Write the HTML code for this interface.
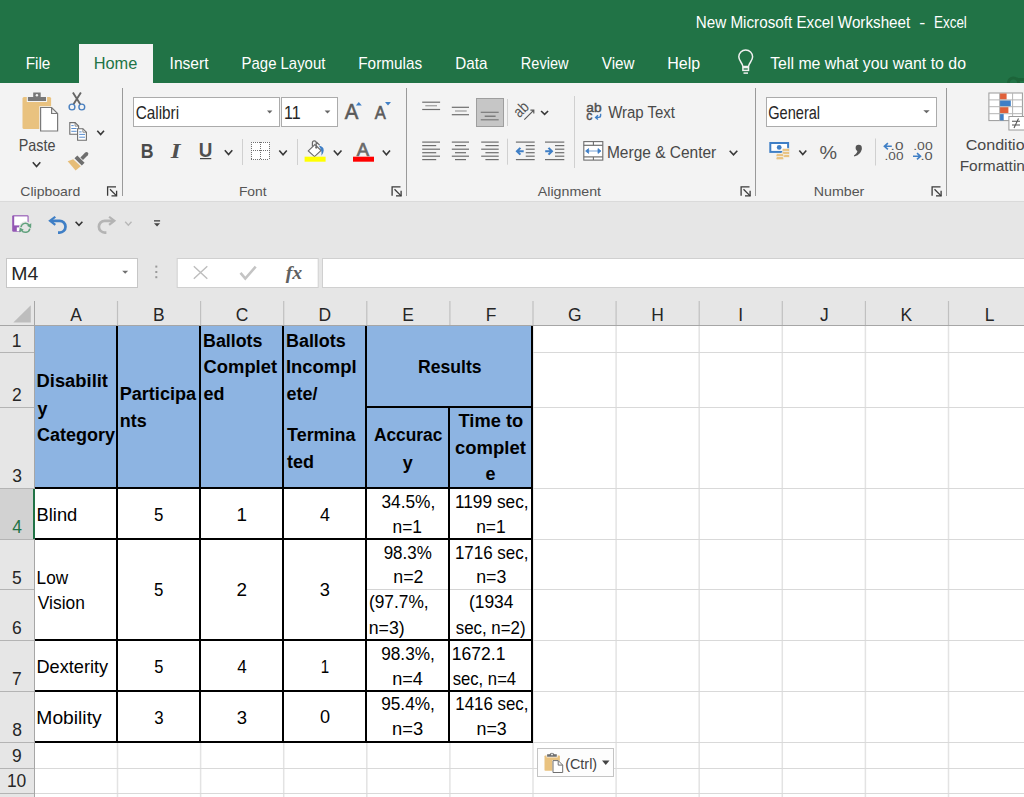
<!DOCTYPE html>
<html><head><meta charset="utf-8"><style>
html,body{margin:0;padding:0;background:#fff;overflow:hidden}
svg{display:block}
</style></head><body>
<svg width="1024" height="797" viewBox="0 0 1024 797">
<rect x="0" y="0" width="1024" height="83" fill="#217346" />
<rect x="79" y="44" width="74" height="39" fill="#f3f3f3" />
<text transform="translate(695.78 27.70) scale(0.9699 1)" font-family="Liberation Sans" font-size="15.70" font-weight="normal" font-style="normal" fill="#ffffff" >New Microsoft Excel Worksheet</text>
<text transform="translate(919.28 27.70) scale(1.1467 1)" font-family="Liberation Sans" font-size="15.70" font-weight="normal" font-style="normal" fill="#ffffff" >-</text>
<text transform="translate(933.92 27.70) scale(0.8586 1)" font-family="Liberation Sans" font-size="15.70" font-weight="normal" font-style="normal" fill="#ffffff" >Excel</text>
<text transform="translate(25.68 68.75) scale(0.9571 1)" font-family="Liberation Sans" font-size="15.99" font-weight="normal" font-style="normal" fill="#ffffff" >File</text>
<text transform="translate(93.69 68.75) scale(1.0244 1)" font-family="Liberation Sans" font-size="15.99" font-weight="normal" font-style="normal" fill="#217346" >Home</text>
<text transform="translate(169.60 68.75) scale(0.9747 1)" font-family="Liberation Sans" font-size="15.99" font-weight="normal" font-style="normal" fill="#ffffff" >Insert</text>
<text transform="translate(241.61 68.75) scale(0.9331 1)" font-family="Liberation Sans" font-size="15.99" font-weight="normal" font-style="normal" fill="#ffffff" >Page Layout</text>
<text transform="translate(358.28 68.75) scale(0.9575 1)" font-family="Liberation Sans" font-size="15.99" font-weight="normal" font-style="normal" fill="#ffffff" >Formulas</text>
<text transform="translate(455.28 68.75) scale(0.9504 1)" font-family="Liberation Sans" font-size="15.99" font-weight="normal" font-style="normal" fill="#ffffff" >Data</text>
<text transform="translate(520.84 68.75) scale(0.9089 1)" font-family="Liberation Sans" font-size="15.99" font-weight="normal" font-style="normal" fill="#ffffff" >Review</text>
<text transform="translate(601.85 68.75) scale(0.9499 1)" font-family="Liberation Sans" font-size="15.99" font-weight="normal" font-style="normal" fill="#ffffff" >View</text>
<text transform="translate(667.22 68.75) scale(0.9994 1)" font-family="Liberation Sans" font-size="15.99" font-weight="normal" font-style="normal" fill="#ffffff" >Help</text>
<text transform="translate(770.18 68.75) scale(0.9932 1)" font-family="Liberation Sans" font-size="15.99" font-weight="normal" font-style="normal" fill="#ffffff" >Tell me what you want to do</text>
<path d="M1008.4 83 A5 5 0 0 1 1018.6 83 M1018 79.5 H1024" fill="none" stroke="#1c6439" stroke-width="3"/>
<rect x="0" y="83" width="1024" height="118" fill="#f3f3f3" />
<rect x="0" y="201" width="1024" height="1" fill="#dadada" />
<rect x="0" y="202" width="1024" height="99" fill="#e6e6e6" />
<g fill="none" stroke="#f0f0f0" stroke-width="1.5"><path d="M742.9 66.5 C742.6 63 738.8 61 738.8 56.8 A6.9 6.9 0 0 1 752.6 56.8 C752.6 61 748.8 63 748.5 66.5 Z"/><rect x="742.9" y="67.6" width="5.6" height="2.8"/><path d="M743.5 73.1 H748"/></g>
<rect x="122" y="88" width="1" height="108" fill="#9a9a9a" />
<rect x="406" y="88" width="1" height="108" fill="#9a9a9a" />
<rect x="755" y="88" width="1" height="108" fill="#9a9a9a" />
<rect x="946" y="88" width="1" height="108" fill="#9a9a9a" />
<text transform="translate(20.30 196.10) scale(1.0480 1)" font-family="Liberation Sans" font-size="13.37" font-weight="normal" font-style="normal" fill="#555555" >Clipboard</text>
<text transform="translate(238.89 196.10) scale(1.0376 1)" font-family="Liberation Sans" font-size="13.37" font-weight="normal" font-style="normal" fill="#555555" >Font</text>
<text transform="translate(537.80 196.10) scale(1.0645 1)" font-family="Liberation Sans" font-size="13.37" font-weight="normal" font-style="normal" fill="#555555" >Alignment</text>
<text transform="translate(813.76 196.10) scale(1.0655 1)" font-family="Liberation Sans" font-size="13.37" font-weight="normal" font-style="normal" fill="#555555" >Number</text>
<g fill="none" stroke="#3a3a3a" stroke-width="1.3"><path d="M107.6 195.8 V186.9 H116"/><path d="M110 189.3 L116.6 195.9"/><path d="M111.5 195.9 H116.6 V190.8"/></g>
<g fill="none" stroke="#3a3a3a" stroke-width="1.3"><path d="M392.1 195.8 V186.9 H400.5"/><path d="M394.5 189.3 L401.1 195.9"/><path d="M396.0 195.9 H401.1 V190.8"/></g>
<g fill="none" stroke="#3a3a3a" stroke-width="1.3"><path d="M741.1 195.8 V186.9 H749.5"/><path d="M743.5 189.3 L750.1 195.9"/><path d="M745.0 195.9 H750.1 V190.8"/></g>
<g fill="none" stroke="#3a3a3a" stroke-width="1.3"><path d="M932.1 195.8 V186.9 H940.5"/><path d="M934.5 189.3 L941.1 195.9"/><path d="M936.0 195.9 H941.1 V190.8"/></g>
<rect x="22.5" y="97" width="28.6" height="32" rx="1.5" fill="#e9c27f"/>
<rect x="26.8" y="96" width="20.3" height="6" fill="#f3f3f3"/>
<path d="M33.2 92.6 H40.7 V97 H46 V101 H27.9 V97 H33.2 Z" fill="#787878"/>
<circle cx="36.9" cy="95.2" r="1.2" fill="#f3f3f3"/>
<path d="M39.3 106.3 H52.2 L58.8 112.9 V132.3 H39.3 Z" fill="#f3f3f3"/>
<path d="M40.6 107.5 H51.6 L57.6 113.5 V131 H40.6 Z M51.6 107.5 V113.5 H57.6" fill="#ffffff" stroke="#7a7a7a" stroke-width="1.2"/>
<text transform="translate(18.75 150.65) scale(0.8822 1)" font-family="Liberation Sans" font-size="16.28" font-weight="normal" font-style="normal" fill="#484848" >Paste</text>
<path d="M32.8 162.3 L36.55 166.6 L40.3 162.3" fill="none" stroke="#383838" stroke-width="1.6"/>
<path d="M72.9 92.6 L80.3 104.2 M80.9 92.6 L73.5 104.2" stroke="#666" stroke-width="1.9"/>
<circle cx="72" cy="107" r="2.9" fill="none" stroke="#4a80c0" stroke-width="1.4"/>
<circle cx="81.8" cy="107" r="2.9" fill="none" stroke="#4a80c0" stroke-width="1.4"/>
<path d="M69.8 122.6 H75.1 L78.6 126.1 V134.2 H69.8 Z" fill="#fff" stroke="#6e6e6e" stroke-width="1.1"/>
<path d="M75.1 122.6 V126.1 H78.6" fill="none" stroke="#6e6e6e" stroke-width="0.8"/>
<path d="M71.3 125.6 H73.7 M71.3 128.5 H76.6 M71.3 131.3 H76.6" stroke="#5a8fd0" stroke-width="1"/>
<path d="M77.6 128.7 H82.89999999999999 L86.39999999999999 132.2 V140.29999999999998 H77.6 Z" fill="#fff" stroke="#6e6e6e" stroke-width="1.1"/>
<path d="M82.89999999999999 128.7 V132.2 H86.39999999999999" fill="none" stroke="#6e6e6e" stroke-width="0.8"/>
<path d="M79.2 131.9 H81.6 M79.2 134.4 H85 M79.2 137.2 H85" stroke="#5a8fd0" stroke-width="1"/>
<path d="M97.3 130.8 L100.65 134.6 L104 130.8" fill="none" stroke="#383838" stroke-width="1.6"/>
<path d="M67.7 161.3 L73.2 159.2 L80.8 166.2 L75.6 170.5 Z" fill="#e6bd78"/>
<path d="M74.5 158.3 L77.3 155.5 L84.6 162.8 L81.8 165.6 Z" fill="#6e6e6e"/>
<path d="M80.4 157.4 L85.2 152.6 A1.5 1.5 0 0 1 87.8 155.2 L83 160 Z" fill="#6e6e6e"/>
<rect x="133.5" y="97.5" width="146" height="29" fill="#fff" stroke="#ababab" stroke-width="1"/>
<rect x="281.5" y="97.5" width="56" height="29" fill="#fff" stroke="#ababab" stroke-width="1"/>
<text transform="translate(135.63 118.75) scale(0.8811 1)" font-family="Liberation Sans" font-size="17.44" font-weight="normal" font-style="normal" fill="#262626" >Calibri</text>
<text transform="translate(283.92 118.75) scale(0.9199 1)" font-family="Liberation Sans" font-size="17.44" font-weight="normal" font-style="normal" fill="#262626" >11</text>
<path d="M267 110.6 H272.4 L269.7 113.4 Z" fill="#666"/>
<path d="M324.6 110.6 H330.4 L327.5 113.4 Z" fill="#666"/>
<text transform="translate(344.75 119.30) scale(0.9538 1)" font-family="Liberation Sans" font-size="21.37" font-weight="normal" font-style="normal" fill="#5a5a5a" stroke="#5a5a5a" stroke-width="0.6">A</text>
<path d="M355.8 105.6 L358.8 102.1 L361.8 105.6 Z" fill="#3f7fc6"/>
<text transform="translate(374.75 119.30) scale(0.9356 1)" font-family="Liberation Sans" font-size="17.73" font-weight="normal" font-style="normal" fill="#5a5a5a" stroke="#5a5a5a" stroke-width="0.6">A</text>
<path d="M385 102.1 H391 L388 105.6 Z" fill="#3f7fc6"/>
<text transform="translate(140.76 157.50) scale(0.8701 1)" font-family="Liberation Sans" font-size="20.35" font-weight="bold" font-style="normal" fill="#4a4a4a" >B</text>
<text transform="translate(170.75 157.50) scale(1.2343 1)" font-family="Liberation Serif" font-size="20.35" font-weight="bold" font-style="italic" fill="#505050" >I</text>
<text transform="translate(198.87 157.00) scale(0.9598 1)" font-family="Liberation Sans" font-size="19.62" font-weight="bold" font-style="normal" fill="#505050" >U</text>
<rect x="200" y="158" width="11.3" height="1.2" fill="#444" />
<path d="M224.8 150.3 L228.55 154.6 L232.3 150.3" fill="none" stroke="#383838" stroke-width="1.6"/>
<rect x="242" y="139" width="1" height="26" fill="#d0d0d0" />
<rect x="251.5" y="142" width="17.5" height="17.5" fill="#ffffff" />
<g fill="#707070" shape-rendering="crispEdges"><rect x="251" y="141.5" width="1" height="1"/><rect x="251" y="159" width="1" height="1"/><rect x="251" y="141.5" width="1" height="1"/><rect x="268.5" y="141.5" width="1" height="1"/><rect x="251" y="150.3" width="1" height="1"/><rect x="259.8" y="141.5" width="1" height="1"/><rect x="253" y="141.5" width="1" height="1"/><rect x="253" y="159" width="1" height="1"/><rect x="251" y="143.5" width="1" height="1"/><rect x="268.5" y="143.5" width="1" height="1"/><rect x="253" y="150.3" width="1" height="1"/><rect x="259.8" y="143.5" width="1" height="1"/><rect x="255" y="141.5" width="1" height="1"/><rect x="255" y="159" width="1" height="1"/><rect x="251" y="145.5" width="1" height="1"/><rect x="268.5" y="145.5" width="1" height="1"/><rect x="255" y="150.3" width="1" height="1"/><rect x="259.8" y="145.5" width="1" height="1"/><rect x="257" y="141.5" width="1" height="1"/><rect x="257" y="159" width="1" height="1"/><rect x="251" y="147.5" width="1" height="1"/><rect x="268.5" y="147.5" width="1" height="1"/><rect x="257" y="150.3" width="1" height="1"/><rect x="259.8" y="147.5" width="1" height="1"/><rect x="259" y="141.5" width="1" height="1"/><rect x="259" y="159" width="1" height="1"/><rect x="251" y="149.5" width="1" height="1"/><rect x="268.5" y="149.5" width="1" height="1"/><rect x="259" y="150.3" width="1" height="1"/><rect x="259.8" y="149.5" width="1" height="1"/><rect x="261" y="141.5" width="1" height="1"/><rect x="261" y="159" width="1" height="1"/><rect x="251" y="151.5" width="1" height="1"/><rect x="268.5" y="151.5" width="1" height="1"/><rect x="261" y="150.3" width="1" height="1"/><rect x="259.8" y="151.5" width="1" height="1"/><rect x="263" y="141.5" width="1" height="1"/><rect x="263" y="159" width="1" height="1"/><rect x="251" y="153.5" width="1" height="1"/><rect x="268.5" y="153.5" width="1" height="1"/><rect x="263" y="150.3" width="1" height="1"/><rect x="259.8" y="153.5" width="1" height="1"/><rect x="265" y="141.5" width="1" height="1"/><rect x="265" y="159" width="1" height="1"/><rect x="251" y="155.5" width="1" height="1"/><rect x="268.5" y="155.5" width="1" height="1"/><rect x="265" y="150.3" width="1" height="1"/><rect x="259.8" y="155.5" width="1" height="1"/><rect x="267" y="141.5" width="1" height="1"/><rect x="267" y="159" width="1" height="1"/><rect x="251" y="157.5" width="1" height="1"/><rect x="268.5" y="157.5" width="1" height="1"/><rect x="267" y="150.3" width="1" height="1"/><rect x="259.8" y="157.5" width="1" height="1"/></g>
<path d="M279.3 150.5 L283.05 154.8 L286.8 150.5" fill="none" stroke="#383838" stroke-width="1.6"/>
<rect x="297" y="139" width="1" height="26" fill="#d0d0d0" />
<path d="M308.3 150.9 L314.9 144.5 L321.1 150.5 L314.5 156.6 Z" fill="#fff" stroke="#6a6a6a" stroke-width="1.1"/>
<path d="M312.4 146.4 V142.8 A1.9 1.9 0 0 1 316.2 142.8 V147.3 M316.6 142.2 L319.6 145.2" fill="none" stroke="#6a6a6a" stroke-width="1.2"/>
<circle cx="316.2" cy="147.6" r="1.1" fill="#6a6a6a"/>
<path d="M318.8 145.6 Q323.9 146.5 323.7 150.5 Q323.5 153.5 321.4 155.8 Q322.3 151 318.8 145.6 Z" fill="#3f7fc6"/>
<rect x="304.6" y="156.7" width="21" height="5" fill="#ffff00" />
<path d="M333.8 150.5 L337.65 154.8 L341.5 150.5" fill="none" stroke="#383838" stroke-width="1.6"/>
<text transform="translate(356.80 156.20) scale(0.9635 1)" font-family="Liberation Sans" font-size="19.19" font-weight="normal" font-style="normal" fill="#6a6a6a" stroke="#6a6a6a" stroke-width="0.7">A</text>
<rect x="353" y="156.7" width="21" height="5" fill="#ff0000" />
<path d="M382.8 150.5 L386.4 154.8 L390 150.5" fill="none" stroke="#383838" stroke-width="1.6"/>
<path d="M422.2 102.2 H440.1" stroke="#6e6e6e" stroke-width="1.2"/>
<path d="M425.3 105.75 H437" stroke="#9a9a9a" stroke-width="1.2"/>
<path d="M422.2 109.5 H440.1" stroke="#6e6e6e" stroke-width="1.2"/>
<path d="M451.8 107.3 H469" stroke="#6e6e6e" stroke-width="1.2"/>
<path d="M455 111 H466.7" stroke="#9a9a9a" stroke-width="1.2"/>
<path d="M451.8 114.7 H469" stroke="#6e6e6e" stroke-width="1.2"/>
<rect x="476.5" y="98.5" width="27" height="28" fill="#c6c6c6" stroke="#9e9e9e" stroke-width="1"/>
<path d="M480.75 112.3 H498.7" stroke="#7a7a7a" stroke-width="1.2"/>
<path d="M484.7 116.2 H495.6" stroke="#6a6a6a" stroke-width="1.2"/>
<path d="M480.75 119.8 H498.7" stroke="#7a7a7a" stroke-width="1.2"/>
<rect x="507" y="99" width="1" height="27" fill="#d0d0d0" />
<g transform="translate(522.6 110.6) rotate(-45)"><text transform="translate(-7.52 3.20) scale(0.8269 1)" font-family="Liberation Sans" font-size="15.70" font-weight="normal" font-style="normal" fill="#555555" >ab</text></g>
<path d="M524.3 119.6 L533.6 110.3 M530.4 110.2 H533.8 V113.5" fill="none" stroke="#5a5a5a" stroke-width="1.2"/>
<path d="M541.1 111 L544.6 114.4 L548.1 111" fill="none" stroke="#383838" stroke-width="1.6"/>
<rect x="574" y="96" width="1" height="72" fill="#d0d0d0" />
<text transform="translate(586.25 111.60) scale(1.0577 1)" font-family="Liberation Sans" font-size="13.00" font-weight="normal" font-style="normal" fill="#505050" stroke="#505050" stroke-width="0.45">ab</text>
<text transform="translate(586.31 120.00) scale(0.9481 1)" font-family="Liberation Sans" font-size="13.00" font-weight="normal" font-style="normal" fill="#505050" stroke="#505050" stroke-width="0.45">c</text>
<path d="M600.6 113.8 V115.6 Q600.6 117.4 598.8 117.4 H596.2 M598 115.2 L595.6 117.4 L598 119.6" fill="none" stroke="#3f7fc6" stroke-width="1.4"/>
<text transform="translate(608.20 118.30) scale(0.9201 1)" font-family="Liberation Sans" font-size="16.28" font-weight="normal" font-style="normal" fill="#484848" >Wrap Text</text>
<path d="M422.2 142.1 H440" stroke="#6e6e6e" stroke-width="1.2"/>
<path d="M422.2 145.6 H436.2" stroke="#6e6e6e" stroke-width="1.2"/>
<path d="M422.2 149.2 H440" stroke="#6e6e6e" stroke-width="1.2"/>
<path d="M422.2 152.7 H436.2" stroke="#6e6e6e" stroke-width="1.2"/>
<path d="M422.2 156.2 H440" stroke="#6e6e6e" stroke-width="1.2"/>
<path d="M422.2 159.6 H436.2" stroke="#6e6e6e" stroke-width="1.2"/>
<path d="M451.8 142.1 H469" stroke="#6e6e6e" stroke-width="1.2"/>
<path d="M455 145.6 H466" stroke="#6e6e6e" stroke-width="1.2"/>
<path d="M451.8 149.2 H469" stroke="#6e6e6e" stroke-width="1.2"/>
<path d="M455 152.7 H466" stroke="#6e6e6e" stroke-width="1.2"/>
<path d="M451.8 156.2 H469" stroke="#6e6e6e" stroke-width="1.2"/>
<path d="M455 159.6 H466" stroke="#6e6e6e" stroke-width="1.2"/>
<path d="M481.2 142.1 H498.7" stroke="#6e6e6e" stroke-width="1.2"/>
<path d="M485.4 145.6 H498.7" stroke="#6e6e6e" stroke-width="1.2"/>
<path d="M481.2 149.2 H498.7" stroke="#6e6e6e" stroke-width="1.2"/>
<path d="M485.4 152.7 H498.7" stroke="#6e6e6e" stroke-width="1.2"/>
<path d="M481.2 156.2 H498.7" stroke="#6e6e6e" stroke-width="1.2"/>
<path d="M485.4 159.6 H498.7" stroke="#6e6e6e" stroke-width="1.2"/>
<rect x="507" y="138.7" width="1" height="26" fill="#d0d0d0" />
<path d="M515.9 142.1 H534.7" stroke="#6e6e6e" stroke-width="1.2"/>
<path d="M515.9 159.6 H534.7" stroke="#6e6e6e" stroke-width="1.2"/>
<path d="M525.75 145.6 H534.7" stroke="#6e6e6e" stroke-width="1.2"/>
<path d="M525.75 149.2 H534.7" stroke="#6e6e6e" stroke-width="1.2"/>
<path d="M525.75 152.7 H534.7" stroke="#6e6e6e" stroke-width="1.2"/>
<path d="M525.75 156.2 H534.7" stroke="#6e6e6e" stroke-width="1.2"/>
<path d="M515.5 151.2 L519.6 147.2 L521.2 148.5 L519.3 150.2 H523.7 V152.2 H519.3 L521.2 153.9 L519.6 155.2 Z" fill="#3f7fc6"/>
<path d="M545 142.1 H564.3" stroke="#6e6e6e" stroke-width="1.2"/>
<path d="M545 159.6 H564.3" stroke="#6e6e6e" stroke-width="1.2"/>
<path d="M555 145.6 H564.3" stroke="#6e6e6e" stroke-width="1.2"/>
<path d="M555 149.2 H564.3" stroke="#6e6e6e" stroke-width="1.2"/>
<path d="M555 152.7 H564.3" stroke="#6e6e6e" stroke-width="1.2"/>
<path d="M555 156.2 H564.3" stroke="#6e6e6e" stroke-width="1.2"/>
<path d="M553.4 151.2 L549.3 147.2 L547.7 148.5 L549.6 150.2 H545.2 V152.2 H549.6 L547.7 153.9 L549.3 155.2 Z" fill="#3f7fc6"/>
<rect x="583.8" y="141.6" width="19" height="18.5" fill="#fff" stroke="#6e6e6e" stroke-width="1.1"/>
<path d="M583.8 145.3 H602.8" stroke="#6e6e6e" stroke-width="1.2"/>
<path d="M583.8 156.9 H602.8" stroke="#6e6e6e" stroke-width="1.2"/>
<path d="M593.4 141.6 V145.3 M593.4 156.9 V160.1" stroke="#6e6e6e" stroke-width="1.1"/>
<path d="M587.5 151 H599.1" stroke="#8fb2dc" stroke-width="1.2"/>
<path d="M585.6 151 L588.6 148.6 V153.4 Z M601 151 L598 148.6 V153.4 Z" fill="#3f7fc6" stroke="#3f7fc6" stroke-width="0.8" stroke-linejoin="round"/>
<text transform="translate(606.96 157.90) scale(0.9527 1)" font-family="Liberation Sans" font-size="16.28" font-weight="normal" font-style="normal" fill="#484848" >Merge &amp; Center</text>
<path d="M729.7 150.7 L733.5 154.8 L737.3 150.7" fill="none" stroke="#383838" stroke-width="1.6"/>
<rect x="766.5" y="97.5" width="170" height="29" fill="#fff" stroke="#ababab" stroke-width="1"/>
<text transform="translate(768.27 118.60) scale(0.8359 1)" font-family="Liberation Sans" font-size="17.44" font-weight="normal" font-style="normal" fill="#262626" >General</text>
<path d="M923.3 110.3 H929.7 L926.5 113.2 Z" fill="#666"/>
<rect x="769.3" y="142" width="19.8" height="10.9" fill="#3f7fc6" />
<rect x="771.3" y="144" width="15.8" height="6.9" fill="#ffffff" />
<circle cx="779.2" cy="147.4" r="2.4" fill="#3f7fc6"/>
<g fill="#e9c27f" stroke="#f3f3f3" stroke-width="0.8"><rect x="782" y="148.4" width="7.8" height="3.2" rx="1.5"/><rect x="782" y="151.4" width="7.8" height="3.2" rx="1.5"/><rect x="782" y="154.4" width="7.8" height="3.2" rx="1.5"/><rect x="776" y="153.6" width="7.8" height="3.2" rx="1.5"/><rect x="776" y="156.6" width="7.8" height="3.2" rx="1.5"/></g>
<path d="M799.3 150.5 L802.8 154.6 L806.3 150.5" fill="none" stroke="#383838" stroke-width="1.6"/>
<text transform="translate(819.61 159.20) scale(1.0297 1)" font-family="Liberation Sans" font-size="19.19" font-weight="normal" font-style="normal" fill="#555555" >%</text>
<circle cx="858.7" cy="147.9" r="3.1" fill="#555"/><path d="M861.7 148.3 Q861.8 154.2 854.3 156.6 L853.9 155.4 Q857.6 153.2 857.4 150.2 Z" fill="#555"/>
<rect x="875" y="138.5" width="1" height="27" fill="#d0d0d0" />
<text transform="translate(890.62 150.20) scale(1.3898 1)" font-family="Liberation Sans" font-size="11.05" font-weight="normal" font-style="normal" fill="#555555" >.0</text>
<text transform="translate(884.58 160.00) scale(1.2286 1)" font-family="Liberation Sans" font-size="11.05" font-weight="normal" font-style="normal" fill="#555555" >.00</text>
<path d="M891.8 146.3 H884.6 M887.9 143.2 L884.4 146.3 L887.9 149.4" fill="none" stroke="#3f7fc6" stroke-width="1.6"/>
<text transform="translate(913.24 150.20) scale(1.2645 1)" font-family="Liberation Sans" font-size="11.05" font-weight="normal" font-style="normal" fill="#555555" >.00</text>
<text transform="translate(920.38 160.00) scale(1.3260 1)" font-family="Liberation Sans" font-size="11.05" font-weight="normal" font-style="normal" fill="#555555" >.0</text>
<path d="M913 156.2 H920.3 M917 153.1 L920.5 156.2 L917 159.3" fill="none" stroke="#3f7fc6" stroke-width="1.6"/>
<rect x="988.9" y="93" width="33.5" height="27.6" fill="#fff" stroke="#9a9a9a" stroke-width="1"/>
<rect x="999.6" y="93.5" width="7" height="6" fill="#e0613a" />
<rect x="999.6" y="100.3" width="11.2" height="6" fill="#3f7fc6" />
<rect x="999.6" y="107.1" width="8.8" height="6" fill="#e0613a" />
<rect x="999.6" y="114" width="4.1" height="6.4" fill="#3f7fc6" />
<path d="M999.6 93 V120.6 M1012.6 93 V120.6 M988.9 99.9 H1022.4 M988.9 106.7 H1022.4 M988.9 113.7 H1022.4" stroke="#b4b4b4" stroke-width="1"/>
<rect x="1008.9" y="116.5" width="20" height="13.5" fill="#fff" stroke="#9a9a9a" stroke-width="1"/>
<path d="M1012 121.3 H1020 M1012 125 H1020 M1014 128 L1018.5 118.5" stroke="#555" stroke-width="1.1"/>
<text transform="translate(965.70 150.30) scale(1.0425 1)" font-family="Liberation Sans" font-size="15.41" font-weight="normal" font-style="normal" fill="#484848" >Conditio</text>
<text transform="translate(959.66 170.70) scale(1.0038 1)" font-family="Liberation Sans" font-size="15.41" font-weight="normal" font-style="normal" fill="#484848" >Formattin</text>
<rect x="12.2" y="215.2" width="16.4" height="16.6" rx="1.2" fill="#9458b5"/>
<rect x="14.2" y="216.4" width="13.3" height="9" fill="#ffffff" />
<rect x="16.8" y="227.4" width="2.2" height="3.8" fill="#ffffff" />
<circle cx="25.4" cy="227.8" r="6.6" fill="#e6e6e6"/>
<path d="M20.97 227.02 A4.5 4.5 0 0 1 29.30 225.55 M29.83 228.58 A4.5 4.5 0 0 1 21.50 230.05" fill="none" stroke="#62a27e" stroke-width="1.5"/><path d="M31.3 223.2 L31.1 228.2 L27 225.8 Z M19.5 232.4 L19.7 227.4 L23.8 229.8 Z" fill="#62a27e"/>
<path d="M51 220.8 H59.6 A5.9 5.9 0 0 1 59.6 232.6 H58" fill="none" stroke="#3f7fc6" stroke-width="2.7"/>
<path d="M48.2 220.8 L54.6 215.9 L56 217.6 L51.9 220.8 L56 224 L54.6 225.7 Z" fill="#3f7fc6"/>
<path d="M75.6 221.8 L79.0 225.3 L82.4 221.8" fill="none" stroke="#333" stroke-width="1.6"/>
<path d="M113.4 220.8 H104.8 A5.9 5.9 0 0 0 104.8 232.6 H106.4" fill="none" stroke="#b4b4b4" stroke-width="2.7"/>
<path d="M116.2 220.8 L109.8 215.9 L108.4 217.6 L112.5 220.8 L108.4 224 L109.8 225.7 Z" fill="#b4b4b4"/>
<path d="M125.2 221.8 L128.35 225.3 L131.5 221.8" fill="none" stroke="#b8b8b8" stroke-width="1.4"/>
<rect x="154" y="220.1" width="6.1" height="1.5" fill="#555" />
<path d="M154 223.2 H160.1 L157.05 226.6 Z" fill="#444"/>
<rect x="6.5" y="258.5" width="131" height="29" fill="#fff" stroke="#c6c6c6" stroke-width="1"/>
<text transform="translate(11.24 279.65) scale(1.0793 1)" font-family="Liberation Sans" font-size="18.02" font-weight="normal" font-style="normal" fill="#262626" >M4</text>
<path d="M122.2 270.8 H128.2 L125.19999999999999 273.7 Z" fill="#707070"/>
<rect x="155.3" y="265.6" width="2" height="2" fill="#9a9a9a" />
<rect x="155.3" y="271" width="2" height="2" fill="#9a9a9a" />
<rect x="155.3" y="276.2" width="2" height="2" fill="#9a9a9a" />
<rect x="177.2" y="258.5" width="141" height="29" fill="#fff" stroke="#d0d0d0" stroke-width="1"/>
<path d="M193.8 266.3 L207.3 278.8 M207.3 266.3 L193.8 278.8" stroke="#bdbdbd" stroke-width="1.4"/>
<path d="M240.5 272.8 L245.3 278.6 L255.7 266.6" fill="none" stroke="#c4c4c4" stroke-width="2.6"/>
<text transform="translate(285.70 278.50) scale(1.0940 1)" font-family="Liberation Serif" font-size="18.17" font-weight="bold" font-style="italic" fill="#606060" >fx</text>
<rect x="322.5" y="258.5" width="720" height="29" fill="#fff" stroke="#d0d0d0" stroke-width="1"/>
<rect x="0" y="301" width="1024" height="24" fill="#e6e6e6" />
<rect x="0" y="325" width="1024" height="1" fill="#a6a6a6" />
<rect x="0" y="326" width="34" height="471" fill="#e6e6e6" />
<rect x="34" y="301" width="1" height="496" fill="#a6a6a6" />
<rect x="35" y="326" width="989" height="471" fill="#ffffff" />
<rect x="116.75" y="326" width="1.5" height="471" fill="#e3e3e3" />
<rect x="116.9" y="301" width="1.2" height="24" fill="#c0c0c0" />
<rect x="199.85" y="326" width="1.5" height="471" fill="#e3e3e3" />
<rect x="200.0" y="301" width="1.2" height="24" fill="#c0c0c0" />
<rect x="282.95" y="326" width="1.5" height="471" fill="#e3e3e3" />
<rect x="283.1" y="301" width="1.2" height="24" fill="#c0c0c0" />
<rect x="366.05" y="326" width="1.5" height="471" fill="#e3e3e3" />
<rect x="366.2" y="301" width="1.2" height="24" fill="#c0c0c0" />
<rect x="449.15" y="326" width="1.5" height="471" fill="#e3e3e3" />
<rect x="449.3" y="301" width="1.2" height="24" fill="#c0c0c0" />
<rect x="532.25" y="326" width="1.5" height="471" fill="#e3e3e3" />
<rect x="532.4" y="301" width="1.2" height="24" fill="#c0c0c0" />
<rect x="615.35" y="326" width="1.5" height="471" fill="#e3e3e3" />
<rect x="615.5" y="301" width="1.2" height="24" fill="#c0c0c0" />
<rect x="698.45" y="326" width="1.5" height="471" fill="#e3e3e3" />
<rect x="698.6" y="301" width="1.2" height="24" fill="#c0c0c0" />
<rect x="781.55" y="326" width="1.5" height="471" fill="#e3e3e3" />
<rect x="781.7" y="301" width="1.2" height="24" fill="#c0c0c0" />
<rect x="864.65" y="326" width="1.5" height="471" fill="#e3e3e3" />
<rect x="864.8" y="301" width="1.2" height="24" fill="#c0c0c0" />
<rect x="947.75" y="326" width="1.5" height="471" fill="#e3e3e3" />
<rect x="947.9" y="301" width="1.2" height="24" fill="#c0c0c0" />
<rect x="1030.85" y="326" width="1.5" height="471" fill="#e3e3e3" />
<rect x="1031.0" y="301" width="1.2" height="24" fill="#c0c0c0" />
<rect x="35" y="352" width="989" height="1" fill="#d9d9d9" />
<rect x="0" y="352" width="34" height="1" fill="#b4b4b4" />
<rect x="35" y="407" width="989" height="1" fill="#d9d9d9" />
<rect x="0" y="407" width="34" height="1" fill="#b4b4b4" />
<rect x="35" y="488" width="989" height="1" fill="#d9d9d9" />
<rect x="0" y="488" width="34" height="1" fill="#b4b4b4" />
<rect x="35" y="539" width="989" height="1" fill="#d9d9d9" />
<rect x="0" y="539" width="34" height="1" fill="#b4b4b4" />
<rect x="35" y="589" width="989" height="1" fill="#d9d9d9" />
<rect x="0" y="589" width="34" height="1" fill="#b4b4b4" />
<rect x="35" y="640" width="989" height="1" fill="#d9d9d9" />
<rect x="0" y="640" width="34" height="1" fill="#b4b4b4" />
<rect x="35" y="691" width="989" height="1" fill="#d9d9d9" />
<rect x="0" y="691" width="34" height="1" fill="#b4b4b4" />
<rect x="35" y="742" width="989" height="1" fill="#d9d9d9" />
<rect x="0" y="742" width="34" height="1" fill="#b4b4b4" />
<rect x="35" y="768" width="989" height="1" fill="#d9d9d9" />
<rect x="0" y="768" width="34" height="1" fill="#b4b4b4" />
<rect x="35" y="793" width="989" height="1" fill="#d9d9d9" />
<rect x="0" y="793" width="34" height="1" fill="#b4b4b4" />
<path d="M13.3 322.4 L30.8 305.2 V322.4 Z" fill="#bdbdbd"/>
<rect x="0" y="489" width="34" height="50" fill="#d2d2d2" />
<rect x="33" y="489" width="2" height="50" fill="#217346" />
<rect x="35" y="326" width="497" height="162" fill="#8db4e2" />
<rect x="35" y="489" width="497" height="253" fill="#ffffff" />
<rect x="367" y="589" width="164" height="1" fill="#d4d4d4" />
<rect x="116" y="326" width="2" height="417" fill="#000000" />
<rect x="199" y="326" width="2" height="417" fill="#000000" />
<rect x="282" y="326" width="2" height="417" fill="#000000" />
<rect x="365" y="326" width="2" height="417" fill="#000000" />
<rect x="531" y="326" width="2" height="417" fill="#000000" />
<rect x="448" y="406" width="2" height="337" fill="#000000" />
<rect x="365" y="406" width="168" height="2" fill="#000000" />
<rect x="35" y="487" width="498" height="2" fill="#000000" />
<rect x="35" y="538" width="498" height="2" fill="#000000" />
<rect x="35" y="639" width="498" height="2" fill="#000000" />
<rect x="35" y="690" width="498" height="2" fill="#000000" />
<rect x="35" y="741" width="498" height="2" fill="#000000" />
<text transform="translate(70.19 321.00) scale(1.0000 1)" font-family="Liberation Sans" font-size="17.44" font-weight="normal" font-style="normal" fill="#262626" >A</text>
<text transform="translate(152.95 321.00) scale(1.0000 1)" font-family="Liberation Sans" font-size="17.44" font-weight="normal" font-style="normal" fill="#262626" >B</text>
<text transform="translate(235.78 321.00) scale(1.0000 1)" font-family="Liberation Sans" font-size="17.44" font-weight="normal" font-style="normal" fill="#262626" >C</text>
<text transform="translate(318.62 321.00) scale(1.0000 1)" font-family="Liberation Sans" font-size="17.44" font-weight="normal" font-style="normal" fill="#262626" >D</text>
<text transform="translate(402.16 321.00) scale(1.0000 1)" font-family="Liberation Sans" font-size="17.44" font-weight="normal" font-style="normal" fill="#262626" >E</text>
<text transform="translate(485.78 321.00) scale(1.0000 1)" font-family="Liberation Sans" font-size="17.44" font-weight="normal" font-style="normal" fill="#262626" >F</text>
<text transform="translate(568.01 321.00) scale(1.0000 1)" font-family="Liberation Sans" font-size="17.44" font-weight="normal" font-style="normal" fill="#262626" >G</text>
<text transform="translate(651.37 321.00) scale(1.0000 1)" font-family="Liberation Sans" font-size="17.44" font-weight="normal" font-style="normal" fill="#262626" >H</text>
<text transform="translate(738.31 321.00) scale(1.0000 1)" font-family="Liberation Sans" font-size="17.44" font-weight="normal" font-style="normal" fill="#262626" >I</text>
<text transform="translate(819.93 321.00) scale(1.0000 1)" font-family="Liberation Sans" font-size="17.44" font-weight="normal" font-style="normal" fill="#262626" >J</text>
<text transform="translate(900.58 321.00) scale(1.0000 1)" font-family="Liberation Sans" font-size="17.44" font-weight="normal" font-style="normal" fill="#262626" >K</text>
<text transform="translate(984.82 321.00) scale(1.0000 1)" font-family="Liberation Sans" font-size="17.44" font-weight="normal" font-style="normal" fill="#262626" >L</text>
<text transform="translate(11.85 347.00) scale(1.0000 1)" font-family="Liberation Sans" font-size="17.44" font-weight="normal" font-style="normal" fill="#262626" >1</text>
<text transform="translate(12.12 401.00) scale(1.0000 1)" font-family="Liberation Sans" font-size="17.44" font-weight="normal" font-style="normal" fill="#262626" >2</text>
<text transform="translate(12.20 482.00) scale(1.0000 1)" font-family="Liberation Sans" font-size="17.44" font-weight="normal" font-style="normal" fill="#262626" >3</text>
<text transform="translate(12.20 533.00) scale(1.0000 1)" font-family="Liberation Sans" font-size="17.44" font-weight="normal" font-style="normal" fill="#217346" >4</text>
<text transform="translate(12.12 584.00) scale(1.0000 1)" font-family="Liberation Sans" font-size="17.44" font-weight="normal" font-style="normal" fill="#262626" >5</text>
<text transform="translate(12.12 634.00) scale(1.0000 1)" font-family="Liberation Sans" font-size="17.44" font-weight="normal" font-style="normal" fill="#262626" >6</text>
<text transform="translate(12.12 685.00) scale(1.0000 1)" font-family="Liberation Sans" font-size="17.44" font-weight="normal" font-style="normal" fill="#262626" >7</text>
<text transform="translate(12.20 736.00) scale(1.0000 1)" font-family="Liberation Sans" font-size="17.44" font-weight="normal" font-style="normal" fill="#262626" >8</text>
<text transform="translate(12.12 762.00) scale(1.0000 1)" font-family="Liberation Sans" font-size="17.44" font-weight="normal" font-style="normal" fill="#262626" >9</text>
<text transform="translate(6.88 787.00) scale(1.0000 1)" font-family="Liberation Sans" font-size="17.44" font-weight="normal" font-style="normal" fill="#262626" >10</text>
<text transform="translate(36.51 387.30) scale(1.0534 1)" font-family="Liberation Sans" font-size="17.44" font-weight="bold" font-style="normal" fill="#000" >Disabilit</text>
<text transform="translate(37.62 414.80) scale(1.0300 1)" font-family="Liberation Sans" font-size="17.44" font-weight="bold" font-style="normal" fill="#000" >y</text>
<text transform="translate(37.08 440.50) scale(1.0300 1)" font-family="Liberation Sans" font-size="17.44" font-weight="bold" font-style="normal" fill="#000" >Category</text>
<text transform="translate(119.73 400.00) scale(1.0364 1)" font-family="Liberation Sans" font-size="17.44" font-weight="bold" font-style="normal" fill="#000" >Participa</text>
<text transform="translate(119.74 426.80) scale(1.0300 1)" font-family="Liberation Sans" font-size="17.44" font-weight="bold" font-style="normal" fill="#000" >nts</text>
<text transform="translate(203.05 346.60) scale(1.0224 1)" font-family="Liberation Sans" font-size="17.44" font-weight="bold" font-style="normal" fill="#000" >Ballots</text>
<text transform="translate(203.56 373.30) scale(1.0538 1)" font-family="Liberation Sans" font-size="17.44" font-weight="bold" font-style="normal" fill="#000" >Complet</text>
<text transform="translate(203.58 399.60) scale(1.0300 1)" font-family="Liberation Sans" font-size="17.44" font-weight="bold" font-style="normal" fill="#000" >ed</text>
<text transform="translate(285.94 346.60) scale(1.0300 1)" font-family="Liberation Sans" font-size="17.44" font-weight="bold" font-style="normal" fill="#000" >Ballots</text>
<text transform="translate(285.91 373.30) scale(1.0583 1)" font-family="Liberation Sans" font-size="17.44" font-weight="bold" font-style="normal" fill="#000" >Incompl</text>
<text transform="translate(286.48 399.60) scale(1.0300 1)" font-family="Liberation Sans" font-size="17.44" font-weight="bold" font-style="normal" fill="#000" >ete/</text>
<text transform="translate(287.02 441.20) scale(1.0300 1)" font-family="Liberation Sans" font-size="17.44" font-weight="bold" font-style="normal" fill="#000" >Termina</text>
<text transform="translate(287.02 467.90) scale(1.0300 1)" font-family="Liberation Sans" font-size="17.44" font-weight="bold" font-style="normal" fill="#000" >ted</text>
<text transform="translate(417.97 373.30) scale(1.0095 1)" font-family="Liberation Sans" font-size="17.44" font-weight="bold" font-style="normal" fill="#000" >Results</text>
<text transform="translate(373.88 441.20) scale(0.9949 1)" font-family="Liberation Sans" font-size="17.44" font-weight="bold" font-style="normal" fill="#000" >Accurac</text>
<text transform="translate(402.77 469.00) scale(1.0300 1)" font-family="Liberation Sans" font-size="17.44" font-weight="bold" font-style="normal" fill="#000" >y</text>
<text transform="translate(458.52 427.20) scale(1.0481 1)" font-family="Liberation Sans" font-size="17.44" font-weight="bold" font-style="normal" fill="#000" >Time to</text>
<text transform="translate(454.96 453.50) scale(1.0602 1)" font-family="Liberation Sans" font-size="17.44" font-weight="bold" font-style="normal" fill="#000" >complet</text>
<text transform="translate(485.47 480.30) scale(1.0300 1)" font-family="Liberation Sans" font-size="17.44" font-weight="bold" font-style="normal" fill="#000" >e</text>
<text transform="translate(36.53 521.10) scale(1.0529 1)" font-family="Liberation Sans" font-size="17.44" font-weight="normal" font-style="normal" fill="#000" >Blind</text>
<text transform="translate(154.12 521.10) scale(0.9675 1)" font-family="Liberation Sans" font-size="17.44" font-weight="normal" font-style="normal" fill="#000" >5</text>
<text transform="translate(236.59 521.10) scale(1.0800 1)" font-family="Liberation Sans" font-size="17.44" font-weight="normal" font-style="normal" fill="#000" >1</text>
<text transform="translate(320.04 521.10) scale(1.0230 1)" font-family="Liberation Sans" font-size="17.44" font-weight="normal" font-style="normal" fill="#000" >4</text>
<text transform="translate(381.41 507.70) scale(0.9933 1)" font-family="Liberation Sans" font-size="17.44" font-weight="normal" font-style="normal" fill="#000" >34.5%,</text>
<text transform="translate(392.48 532.80) scale(0.9979 1)" font-family="Liberation Sans" font-size="17.44" font-weight="normal" font-style="normal" fill="#000" >n=1</text>
<text transform="translate(454.92 507.70) scale(0.9911 1)" font-family="Liberation Sans" font-size="17.44" font-weight="normal" font-style="normal" fill="#000" >1199 sec,</text>
<text transform="translate(476.18 532.80) scale(0.9979 1)" font-family="Liberation Sans" font-size="17.44" font-weight="normal" font-style="normal" fill="#000" >n=1</text>
<text transform="translate(36.62 583.70) scale(0.9861 1)" font-family="Liberation Sans" font-size="17.44" font-weight="normal" font-style="normal" fill="#000" >Low</text>
<text transform="translate(37.83 609.00) scale(0.9984 1)" font-family="Liberation Sans" font-size="17.44" font-weight="normal" font-style="normal" fill="#000" >Vision</text>
<text transform="translate(154.12 595.80) scale(0.9675 1)" font-family="Liberation Sans" font-size="17.44" font-weight="normal" font-style="normal" fill="#000" >5</text>
<text transform="translate(236.55 595.80) scale(1.0843 1)" font-family="Liberation Sans" font-size="17.44" font-weight="normal" font-style="normal" fill="#000" >2</text>
<text transform="translate(319.67 595.80) scale(1.0491 1)" font-family="Liberation Sans" font-size="17.44" font-weight="normal" font-style="normal" fill="#000" >3</text>
<text transform="translate(383.65 559.30) scale(0.9736 1)" font-family="Liberation Sans" font-size="17.44" font-weight="normal" font-style="normal" fill="#000" >98.3%</text>
<text transform="translate(393.26 583.30) scale(1.0197 1)" font-family="Liberation Sans" font-size="17.44" font-weight="normal" font-style="normal" fill="#000" >n=2</text>
<text transform="translate(454.94 559.30) scale(0.9721 1)" font-family="Liberation Sans" font-size="17.44" font-weight="normal" font-style="normal" fill="#000" >1716 sec,</text>
<text transform="translate(476.16 583.30) scale(1.0197 1)" font-family="Liberation Sans" font-size="17.44" font-weight="normal" font-style="normal" fill="#000" >n=3</text>
<text transform="translate(368.96 608.40) scale(0.9938 1)" font-family="Liberation Sans" font-size="17.44" font-weight="normal" font-style="normal" fill="#000" >(97.7%,</text>
<text transform="translate(368.76 633.50) scale(1.0169 1)" font-family="Liberation Sans" font-size="17.44" font-weight="normal" font-style="normal" fill="#000" >n=3)</text>
<text transform="translate(468.96 608.40) scale(0.9981 1)" font-family="Liberation Sans" font-size="17.44" font-weight="normal" font-style="normal" fill="#000" >(1934</text>
<text transform="translate(455.79 633.50) scale(0.9669 1)" font-family="Liberation Sans" font-size="17.44" font-weight="normal" font-style="normal" fill="#000" >sec, n=2)</text>
<text transform="translate(36.45 673.30) scale(1.0415 1)" font-family="Liberation Sans" font-size="17.44" font-weight="normal" font-style="normal" fill="#000" >Dexterity</text>
<text transform="translate(154.14 673.30) scale(0.9436 1)" font-family="Liberation Sans" font-size="17.44" font-weight="normal" font-style="normal" fill="#000" >5</text>
<text transform="translate(237.16 673.30) scale(0.9780 1)" font-family="Liberation Sans" font-size="17.44" font-weight="normal" font-style="normal" fill="#000" >4</text>
<text transform="translate(320.79 672.90) scale(0.8667 1)" font-family="Liberation Sans" font-size="17.44" font-weight="normal" font-style="normal" fill="#000" >1</text>
<text transform="translate(381.14 660.30) scale(0.9908 1)" font-family="Liberation Sans" font-size="17.44" font-weight="normal" font-style="normal" fill="#000" >98.3%,</text>
<text transform="translate(392.13 684.80) scale(1.0392 1)" font-family="Liberation Sans" font-size="17.44" font-weight="normal" font-style="normal" fill="#000" >n=4</text>
<text transform="translate(451.80 660.30) scale(1.0058 1)" font-family="Liberation Sans" font-size="17.44" font-weight="normal" font-style="normal" fill="#000" >1672.1</text>
<text transform="translate(452.70 684.80) scale(0.9556 1)" font-family="Liberation Sans" font-size="17.44" font-weight="normal" font-style="normal" fill="#000" >sec, n=4</text>
<text transform="translate(36.36 723.50) scale(1.1051 1)" font-family="Liberation Sans" font-size="17.44" font-weight="normal" font-style="normal" fill="#000" >Mobility</text>
<text transform="translate(154.13 723.50) scale(0.9637 1)" font-family="Liberation Sans" font-size="17.44" font-weight="normal" font-style="normal" fill="#000" >3</text>
<text transform="translate(236.76 723.50) scale(1.0613 1)" font-family="Liberation Sans" font-size="17.44" font-weight="normal" font-style="normal" fill="#000" >3</text>
<text transform="translate(319.88 723.00) scale(1.0392 1)" font-family="Liberation Sans" font-size="17.44" font-weight="normal" font-style="normal" fill="#000" >0</text>
<text transform="translate(381.14 709.80) scale(0.9908 1)" font-family="Liberation Sans" font-size="17.44" font-weight="normal" font-style="normal" fill="#000" >95.4%,</text>
<text transform="translate(392.12 734.90) scale(1.0523 1)" font-family="Liberation Sans" font-size="17.44" font-weight="normal" font-style="normal" fill="#000" >n=3</text>
<text transform="translate(455.35 709.80) scale(0.9666 1)" font-family="Liberation Sans" font-size="17.44" font-weight="normal" font-style="normal" fill="#000" >1416 sec,</text>
<text transform="translate(476.55 734.90) scale(1.0233 1)" font-family="Liberation Sans" font-size="17.44" font-weight="normal" font-style="normal" fill="#000" >n=3</text>
<rect x="537.5" y="748.5" width="76" height="28" fill="#fdfdfd" stroke="#c4c4c4" stroke-width="1"/>
<text transform="translate(565.13 768.60) scale(1.0449 1)" font-family="Liberation Sans" font-size="13.81" font-weight="normal" font-style="normal" fill="#444" >(Ctrl)</text>
<rect x="544.5" y="755.4" width="15.4" height="15.4" rx="0.8" fill="#e9c27f"/>
<rect x="546.6" y="754.8" width="11" height="2.6" fill="#fdfdfd" />
<path d="M547.1 754.3 H549.6 A2.5 2.5 0 0 1 554.3 754.3 H556.8 V756.7 H547.1 Z" fill="#6e6e6e"/>
<circle cx="552" cy="754.4" r="0.9" fill="#fdfdfd"/>
<path d="M552.4 759.9 H558.5 L563.4 764.8 V773.2 H552.4 Z" fill="#fdfdfd"/>
<path d="M553 760.6 H558.2 L562.7 765.1 V772.5 H553 Z M558.2 760.6 V765.1 H562.7" fill="#fff" stroke="#707070" stroke-width="1"/>
<path d="M602 760.5 L609.5 760.5 L605.75 765 Z" fill="#444"/>
</svg>
</body></html>
